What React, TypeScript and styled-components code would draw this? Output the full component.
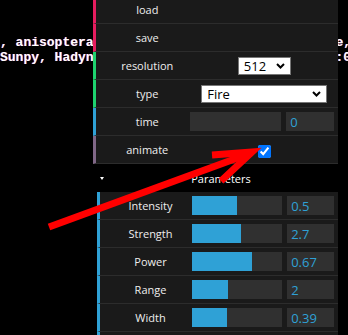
import styled, { createGlobalStyle } from 'styled-components';

const GlobalStyle = createGlobalStyle`
  * {
    box-sizing: border-box;
  }
  body {
    margin: 0;
    background: #000;
    overflow: hidden;
  }
`;

const StyledPage = styled.div`
  position: relative;
  width: 348px;
  height: 335px;
  overflow: hidden;
  background: #000;
`;

const StyledCredits = styled.div`
  padding-top: 35px;
  font-family: 'Liberation Mono', monospace;
  font-size: 13px;
  font-weight: bold;
  line-height: 15px;
  color: #fff;
  white-space: pre;
  text-shadow: -0.6px 0 rgba(255, 0, 0, 0.55), 0.6px 0 rgba(0, 60, 255, 0.55);
`;

const StyledGui = styled.div`
  position: absolute;
  top: -4px;
  right: 10px;
  width: 245px;
  font-family: 'Open Sans', 'Noto Sans', sans-serif;
  font-size: 11px;
  color: #eee;
`;

const StyledRow = styled.div<{ $accent: string }>`
  display: flex;
  align-items: center;
  height: 28px;
  padding: 0 4px 0 5px;
  background: #1a1a1a;
  border-left: 3px solid ${(p) => p.$accent};
  border-bottom: 1px solid #2c2c2c;
`;

const StyledLabel = styled.span`
  width: 38%;
  padding-left: 4px;
  text-align: center;
  white-space: nowrap;
`;

const StyledControl = styled.div<{ $centered?: boolean }>`
  flex: 1;
  display: flex;
  align-items: center;
  justify-content: ${(p) => (p.$centered ? 'center' : 'space-between')};
  padding-left: ${(p) => (p.$centered ? '5px' : '0')};
`;

const StyledTrack = styled.div`
  width: 63.5%;
  height: 19px;
  background: #303030;
`;

const StyledFill = styled.div`
  height: 100%;
  background: #2fa1d6;
`;

const StyledNumber = styled.div`
  width: 33%;
  height: 19px;
  padding: 1px 0 0 4px;
  background: #303030;
  color: #2fa1d6;
  font-size: 13px;
  line-height: 19px;
`;

const StyledSelectWrap = styled.div<{ $width: number }>`
  position: relative;
  width: ${(p) => p.$width}px;
  height: 18px;
`;

const StyledSelect = styled.select`
  appearance: none;
  width: 100%;
  height: 100%;
  margin: 0;
  padding: 0 0 0 5px;
  border: 1px solid #767676;
  border-radius: 0;
  background: #fff;
  color: #000;
  font-family: 'Open Sans', 'Noto Sans', sans-serif;
  font-size: 13px;
  line-height: 16px;
`;

const StyledChevron = styled.svg`
  position: absolute;
  right: 6px;
  top: 6px;
  pointer-events: none;
`;

const StyledCheckbox = styled.input`
  width: 13px;
  height: 13px;
  margin: 3px 0 0 0;
  accent-color: #0075ff;
`;

const StyledFolder = styled.div`
  border-left: 4px solid transparent;
`;

const StyledTitle = styled.div`
  display: flex;
  align-items: center;
  height: 28px;
  padding-left: 3px;
  background: #000;
  color: #fff;
`;

const StyledTriangle = styled.span`
  width: 0;
  height: 0;
  border-left: 2.5px solid transparent;
  border-right: 2.5px solid transparent;
  border-top: 3px solid #fff;
`;

const StyledTitleText = styled.span`
  flex: 1;
  text-align: center;
`;

const StyledArrow = styled.svg`
  position: absolute;
  left: 0;
  top: 0;
  pointer-events: none;
`;

const PINK = '#e61d5f';
const GREEN = '#1ed36f';
const BLUE = '#2fa1d6';
const PURPLE = '#806787';

const params = [
  { name: 'Intensity', value: '0.5', ratio: 0.5 },
  { name: 'Strength', value: '2.7', ratio: 0.54 },
  { name: 'Power', value: '0.67', ratio: 0.67 },
  { name: 'Range', value: '2', ratio: 0.4 },
  { name: 'Width', value: '0.39', ratio: 0.39 },
  { name: 'Height', value: '0.5', ratio: 0.5 },
];

const Chevron = () => (
  <StyledChevron width="9" height="6" viewBox="0 0 9 6">
    <path d="M1 1 L4.5 4.5 L8 1" fill="none" stroke="#000" strokeWidth="2" />
  </StyledChevron>
);

const SliderRow = ({ name, value, ratio }: { name: string; value: string; ratio: number }) => (
  <StyledRow $accent={BLUE}>
    <StyledLabel>{name}</StyledLabel>
    <StyledControl>
      <StyledTrack>
        <StyledFill style={{ width: `${ratio * 100}%` }} />
      </StyledTrack>
      <StyledNumber>{value}</StyledNumber>
    </StyledControl>
  </StyledRow>
);

export default function App() {
  return (
    <StyledPage>
      <GlobalStyle />
      <StyledCredits>
        {', anisoptera, Petrus Bergh, Lou Ark, Antoine, Mel\n'}
        {'Sunpy, Hadyn, Ravi Tandon, Mei Ono. Updated:05'}
      </StyledCredits>

      <StyledGui>
        <StyledRow $accent={PINK}>
          <StyledLabel>load</StyledLabel>
        </StyledRow>
        <StyledRow $accent={PINK}>
          <StyledLabel>save</StyledLabel>
        </StyledRow>
        <StyledRow $accent={GREEN}>
          <StyledLabel>resolution</StyledLabel>
          <StyledControl $centered>
            <StyledSelectWrap $width={53}>
              <StyledSelect defaultValue="512">
                <option>256</option>
                <option>512</option>
                <option>1024</option>
              </StyledSelect>
              <Chevron />
            </StyledSelectWrap>
          </StyledControl>
        </StyledRow>
        <StyledRow $accent={GREEN}>
          <StyledLabel>type</StyledLabel>
          <StyledControl $centered>
            <StyledSelectWrap $width={126}>
              <StyledSelect defaultValue="Fire">
                <option>Fire</option>
                <option>Water</option>
                <option>Smoke</option>
              </StyledSelect>
              <Chevron />
            </StyledSelectWrap>
          </StyledControl>
        </StyledRow>
        <SliderRow name="time" value="0" ratio={0} />
        <StyledRow $accent={PURPLE}>
          <StyledLabel>animate</StyledLabel>
          <StyledControl $centered>
            <StyledCheckbox type="checkbox" defaultChecked />
          </StyledControl>
        </StyledRow>

        <StyledFolder>
          <StyledTitle>
            <StyledTriangle />
            <StyledTitleText>Parameters</StyledTitleText>
          </StyledTitle>
          {params.map((p) => (
            <SliderRow key={p.name} {...p} />
          ))}
        </StyledFolder>
      </StyledGui>

      <StyledArrow width="348" height="335" viewBox="0 0 348 335">
        <line x1="49" y1="227" x2="251" y2="153" stroke="#ff0000" strokeWidth="7" />
        <polyline
          points="212,155 252,152 221,181"
          fill="none"
          stroke="#ff0000"
          strokeWidth="7"
          strokeLinejoin="miter"
        />
      </StyledArrow>
    </StyledPage>
  );
}
